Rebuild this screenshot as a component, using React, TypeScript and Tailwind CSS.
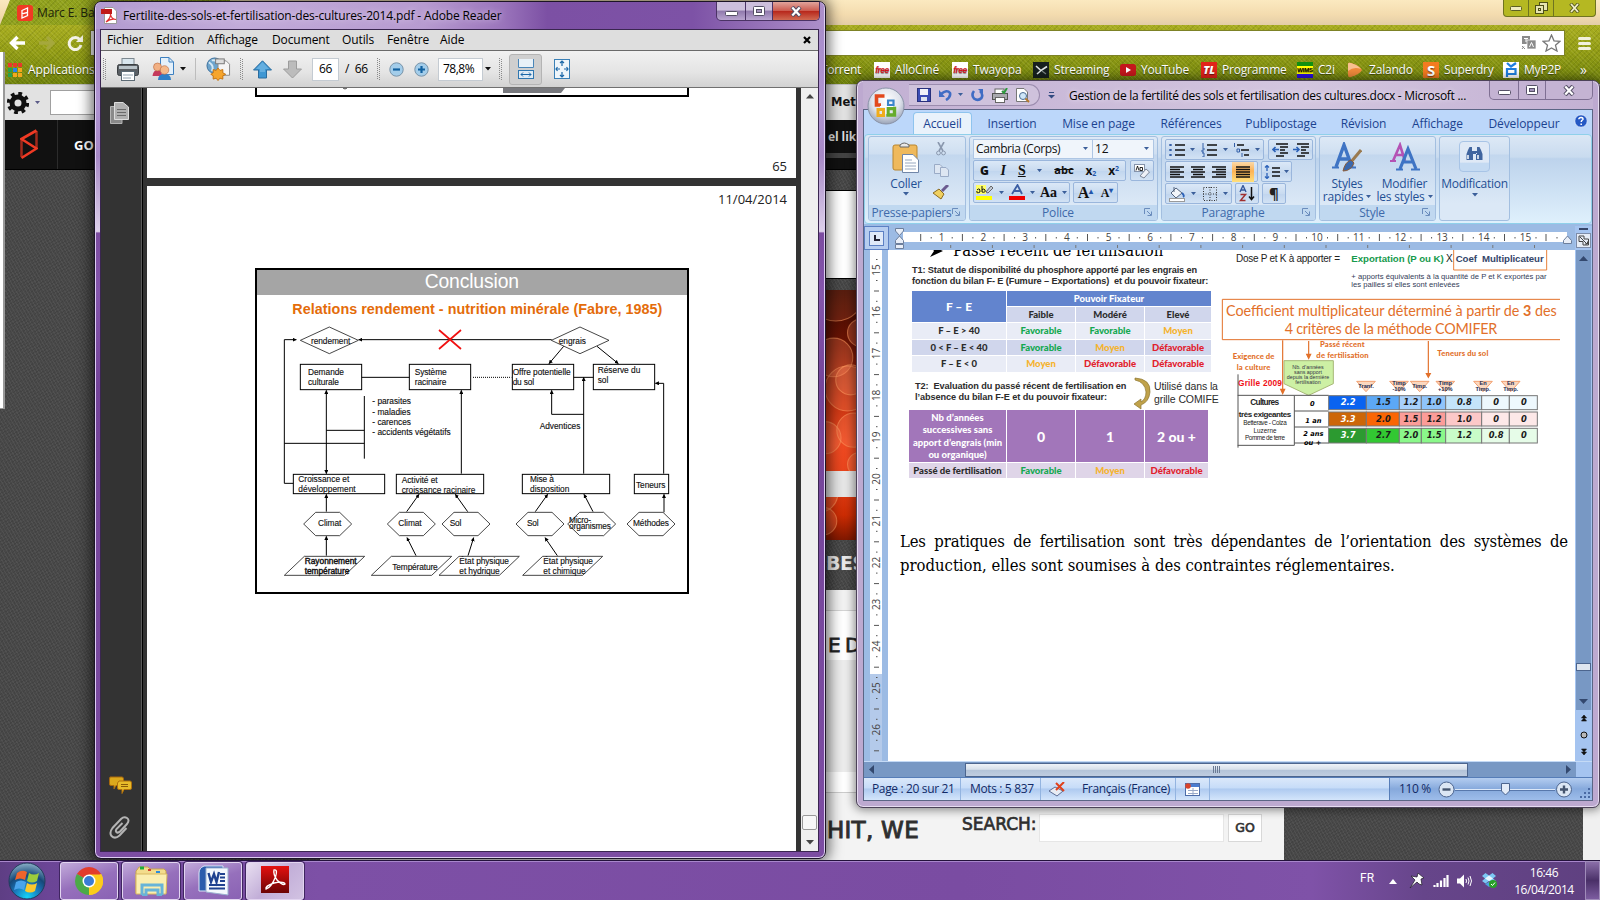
import type { ReactNode } from "react";

const UI = "font-['Open_Sans','Noto_Sans',sans-serif]";

/* ---------- small shared pieces ---------- */

function Caret({ color = "#3b5f9a", size = 6 }: { color?: string; size?: number }) {
  return (
    <svg width={size} height={size / 2 + 1} viewBox="0 0 6 4" className="shrink-0">
      <path d="M0 0H6L3 3.6Z" fill={color} />
    </svg>
  );
}

function Grip() {
  return (
    <svg width="4" height="22" viewBox="0 0 4 22">
      <path d="M0.5 0V22M2.5 1V22" stroke="#8a8a8a" strokeDasharray="1 1" />
    </svg>
  );
}

/* ---------- Chrome window in the background ---------- */

const bookmarks: { w: string; label: string; icon: ReactNode }[] = [
  { w: "w-[78px]", label: "AlloCiné", icon: <FreeIcon /> },
  { w: "w-[81px]", label: "Twayopa", icon: <FreeIcon /> },
  {
    w: "w-[87px]",
    label: "Streaming",
    icon: (
      <svg width="16" height="16" viewBox="0 0 16 16">
        <rect width="16" height="16" fill="#16201f" />
        <path d="M3 4L8 8.500L14 4.500M4 12L7.500 9" stroke="#dfe5e5" strokeWidth="1.6" fill="none" />
        <path d="M9 9L13 12" stroke="#7c8685" strokeWidth="1.200" />
      </svg>
    ),
  },
  {
    w: "w-[81px]",
    label: "YouTube",
    icon: (
      <svg width="16" height="16" viewBox="0 0 16 16">
        <rect y="2" width="16" height="12" rx="2.5" fill="#c4171c" />
        <path d="M6 5L11 8L6 11Z" fill="#fff" />
      </svg>
    ),
  },
  {
    w: "w-[96px]",
    label: "Programme",
    icon: (
      <span className="flex size-4 items-center justify-center bg-[#e2231a] text-[11px] font-black text-white italic">TL</span>
    ),
  },
  {
    w: "w-[51px]",
    label: "C2i",
    icon: (
      <span className="flex size-4 items-center justify-center overflow-hidden bg-[linear-gradient(#109010_0_22%,#ffff00_22%_76%,#2a10e0_76%)] font-['Liberation_Sans',sans-serif] text-[6px] font-bold text-black">
        WIMS
      </span>
    ),
  },
  {
    w: "w-[75px]",
    label: "Zalando",
    icon: (
      <svg width="16" height="16" viewBox="0 0 16 16">
        <path d="M0 2Q0 0 3 1Q12 4 14 8Q12 12 3 15Q0 16 0 13Z" fill="#f08a3c" />
        <path d="M0 2Q0 0 3 1Q10 3 13 7Q6 4 0 9Z" fill="#f9c090" />
      </svg>
    ),
  },
  {
    w: "w-[80px]",
    label: "Superdry",
    icon: <span className="flex size-4 items-center justify-center bg-[#f47b20] text-[15px] font-bold text-white">S</span>,
  },
  {
    w: "w-[74px]",
    label: "MyP2P",
    icon: (
      <svg width="16" height="16" viewBox="0 0 16 16">
        <rect width="16" height="16" fill="#fff" />
        <path d="M4 15V7H12.5V12H4M4 1L8 4.5L13 1" stroke="#1f7fe0" strokeWidth="2.2" fill="none" />
      </svg>
    ),
  },
];

function FreeIcon() {
  return (
    <span className="flex size-4 items-center justify-center overflow-hidden bg-white font-['Liberation_Sans',sans-serif] text-[8.5px] font-bold tracking-[-0.5px] text-[#d8141c] italic">
      free
    </span>
  );
}

const DENIM =
  "bg-[repeating-linear-gradient(45deg,rgba(255,255,160,.10)_0_1px,transparent_1px_3px),repeating-linear-gradient(-45deg,rgba(40,50,0,.12)_0_1px,transparent_1px_4px)]";
const FELT =
  "bg-[repeating-linear-gradient(60deg,rgba(255,255,255,.05)_0_1px,transparent_1px_3px),repeating-linear-gradient(-30deg,rgba(0,0,0,.08)_0_1px,transparent_1px_3px)]";

function Bokeh({ h, offset }: { h: number; offset: number }) {
  return (
    <svg width="964" height={h} viewBox={`480 ${offset} 964 ${h}`} className="block shrink-0">
      <defs>
        <linearGradient id={`bk${offset}`} gradientUnits="userSpaceOnUse" x1="0" y1="0" x2="0" y2="250">
          <stop offset="0" stopColor="#3a0a02" />
          <stop offset=".22" stopColor="#6e1404" />
          <stop offset=".45" stopColor="#c83412" />
          <stop offset=".62" stopColor="#ef4a22" />
          <stop offset=".74" stopColor="#e8441c" />
          <stop offset=".9" stopColor="#cc2c04" />
          <stop offset="1" stopColor="#801800" />
        </linearGradient>
      </defs>
      <rect x="480" y={offset} width="964" height={h} fill={`url(#bk${offset})`} />
      <g fill="#ff8a5c" fillOpacity=".28" stroke="#ff9a60" strokeOpacity=".55" transform="translate(-70 0) scale(1.07)">
        <circle cx="996" cy="2" r="27" fillOpacity=".15" />
        <circle cx="994" cy="63" r="18" />
        <circle cx="1007" cy="92" r="21" />
        <circle cx="1010" cy="84" r="14" />
        <circle cx="986" cy="138" r="15" />
        <circle cx="1013" cy="131" r="16" />
        <circle cx="1018" cy="163" r="11" />
        <circle cx="1020" cy="40" r="13" />
        <circle cx="984" cy="216" r="13" />
        <circle cx="980" cy="190" r="18" />
      </g>
    </svg>
  );
}

function ChromeWindow() {
  return (
    <div className="absolute inset-0 flex flex-col">
      {/* tab strip */}
      <div className="flex h-[25px] shrink-0 justify-between bg-[linear-gradient(#fbe9c0,#f3dbae_60%,#e3cda8)]">
        <div className={`flex h-[25px] w-[230px] items-start bg-[#8fa01c] pl-[17px] [clip-path:polygon(10px_0,100%_0,100%_100%,0_100%)] ${DENIM}`}>
          <svg width="16" height="16" viewBox="0 0 16 16" className="mt-[5px] shrink-0">
            <rect width="16" height="16" rx="3" fill="#f03a24" />
            <path d="M5 5.5L10.500 3V7.500L5 9ZM5 9V13L10.500 10.500V7.500" stroke="#fff" strokeWidth="1.3" fill="none" />
          </svg>
          <span className="mt-[4px] ml-[4px] text-[12px] leading-[18px] tracking-[-0.1px] whitespace-nowrap text-[#20240a]">Marc E. Ba</span>
        </div>
        <div className="mr-1 flex h-[17px] w-[93px] rounded-b-[4px] border border-t-0 border-[#6f7420] bg-[#b5b822]">
          <div className="flex w-[25px] items-center justify-center border-r border-[#6f7420]">
            <svg width="12" height="5"><rect x=".5" y=".5" width="11" height="4" rx="1" fill="#f0ecc0" stroke="#5c5f22" /></svg>
          </div>
          <div className="flex w-[25px] items-center justify-center border-r border-[#6f7420]">
            <svg width="13" height="13" fill="#e6e5b0" stroke="#4d5018">
              <rect x="4.500" y=".5" width="8" height="8" />
              <rect x=".5" y="3.500" width="8" height="8" />
              <rect x="3.500" y="6.500" width="2" height="2" />
            </svg>
          </div>
          <div className="flex flex-1 items-center justify-center">
            <svg width="11" height="10" viewBox="0 0 11 10"><path d="M1.500 0.500L9.500 9.500M9.500 0.500L1.500 9.500" stroke="#5c5f22" strokeWidth="3.500" /><path d="M2 1L9 9M9 1L2 9" stroke="#f3f0cc" strokeWidth="1.8" /></svg>
          </div>
        </div>
      </div>
      {/* toolbar and bookmarks bar */}
      <div className="flex h-[59px] shrink-0 flex-col bg-[linear-gradient(#a8ad20,#8f9a14_50%,#6d800c)]">
        <div className={`flex h-[59px] flex-col ${DENIM}`}>
          <div className="flex h-[31px] items-center pt-[5px]">
            <svg width="90" height="18" viewBox="0 0 90 18" className="shrink-0">
              <path d="M25 9H13M17.500 3L11.500 9L17.500 15" stroke="#fff" strokeWidth="3.400" fill="none" />
              <path d="M39 9H51M47 3L53 9L47 15" stroke="#a5a83c" strokeWidth="3.400" fill="none" />
              <path d="M80 6A6 6 0 1 0 81 11" stroke="#f4f3e6" strokeWidth="3" fill="none" />
              <path d="M76 8H83V1Z" fill="#f4f3e6" />
            </svg>
            <div className="flex h-[26px] flex-1 items-center justify-end gap-[6px] border border-[#7d8226] bg-white pr-[3px]">
              <svg width="15" height="14" viewBox="0 0 15 14">
                <rect x="1" width="8" height="8" fill="#8a8a8a" /><rect x="6" y="4" width="9" height="9" fill="#8a8a8a" stroke="#fff" strokeWidth=".7" />
                <path d="M8.500 11L10.500 6.500L12.500 11M3 2.500H7M5 2.500V6" stroke="#fff" fill="none" /><path d="M1 10L4 13M3 10.500L1 13" stroke="#8a8a8a" />
              </svg>
              <svg width="19" height="18" viewBox="0 0 19 18"><path d="M9.500 1L12 6.800L18 7.300L13.500 11.300L15 17L9.500 13.900L4 17L5.500 11.300L1 7.300L7 6.800Z" fill="#fff" stroke="#777" strokeWidth="1.300" /></svg>
            </div>
            <div className="flex w-[35px] flex-col items-center gap-[2px] pl-[3px]">
              <i className="h-[3px] w-[13px] rounded-sm bg-[#f2f0dc]" />
              <i className="h-[3px] w-[13px] rounded-sm bg-[#f2f0dc]" />
              <i className="h-[3px] w-[13px] rounded-sm bg-[#f2f0dc]" />
            </div>
          </div>
          <div className="flex h-[28px] items-center text-[12px] text-white [text-shadow:0_1px_1px_rgba(0,0,0,.5)]">
            <svg width="14" height="14" viewBox="0 0 14 14" className="ml-[8px] shrink-0">
              <path d="M0 2H14" stroke="#e83a2c" strokeWidth="4" strokeDasharray="4 1" />
              <path d="M0 7H4M0 12H4" stroke="#2aa14a" strokeWidth="4" />
              <path d="M5 7H9" stroke="#2a86e8" strokeWidth="4" />
              <path d="M5 12H9M10 12H14M10 7H14" stroke="#f4a81c" strokeWidth="4" />
            </svg>
            <span className="ml-[6px] w-[793px] shrink-0 tracking-[-0.15px]">Applications</span>
            <span className="w-[53px] shrink-0 tracking-[-0.3px]">Torrent</span>
            {bookmarks.map((b) => (
              <span key={b.label} className={`flex shrink-0 items-center gap-[5px] whitespace-nowrap tracking-[-0.2px] ${b.w}`}>
                {b.icon}
                {b.label}
              </span>
            ))}
            <span className="ml-[3px] text-[14px] leading-[14px]">»</span>
          </div>
        </div>
      </div>
      {/* web page */}
      <div className="flex min-h-0 flex-1">
        <div className="flex w-[1583px] flex-col bg-[#484848]">
          <div className="flex h-[36px] shrink-0 items-center border-t border-[#bfbfbf] bg-[#e2e2e2] pl-[7px]">
            <svg width="22" height="22" viewBox="-11 -11 22 22">
              <circle r="6" fill="none" stroke="#111" strokeWidth="5" />
              <circle r="9.500" fill="none" stroke="#111" strokeWidth="3.500" strokeDasharray="3.730 3.730" />
            </svg>
            <span className="ml-[6px]"><Caret color="#5c5c88" size={5} /></span>
            <div className="ml-[10px] h-[25px] w-[760px] border border-[#a0a0a0] bg-white" />
            <span className="ml-[21px] font-['DejaVu_Sans',sans-serif] text-[11.5px] font-bold text-[#141414]">Met</span>
          </div>
          <div className="flex h-[50px] shrink-0 border-b border-black bg-[#111] font-['Open_Sans',sans-serif] text-[13px] font-bold text-white">
            <div className="flex w-[58px] items-center justify-center border-r border-[#2c2c2c]">
              <svg width="18" height="31" viewBox="0 0 18 31"><path d="M1.500 10V28M16.500 20V2" stroke="#a02a1c" strokeWidth="2.500" fill="none" /><path d="M16.500 1.500L1.500 10L16.500 19.500L1.500 29" stroke="#f03a24" strokeWidth="2.600" fill="none" /></svg>
            </div>
            <span className="w-[262px] pt-[16px] pl-[16px]">GO</span>
            <div className="flex flex-1 flex-col">
              <span className="h-[33px] pt-[8px] pl-[508px] text-[12px] tracking-[-0.1px] text-[#ddd]">el lik</span>
              <div className="h-[5px] w-[964px] bg-[#444]" />
            </div>
          </div>
          <div className={`flex min-h-0 flex-1 ${FELT}`}>
            <div className="ml-[320px] flex w-[964px] flex-col">
              <div className="mt-[20px] h-[89px] shrink-0 border-y border-black bg-white" />
              <div className="h-[11px] shrink-0" />
              <Bokeh h={181} offset={0} />
              <div className="h-[26px] shrink-0 bg-[#e6e6e6]" />
              <Bokeh h={43} offset={207} />
              <div className="h-[50px] shrink-0 pt-[9px] pl-[506px] font-['DejaVu_Sans',sans-serif] text-[19px] font-bold tracking-tight text-[#e8e8e8]">BES</div>
              <div className="h-[21px] shrink-0 border-b border-[#d4d4d4] bg-[#f2f2f2]" />
              <div className="flex h-[49px] shrink-0 items-center bg-white pt-[19px] pl-[508px] font-['DejaVu_Sans',sans-serif] text-[20px] text-[#111] [-webkit-text-stroke:.8px_#333]">
                <span className="w-[17px]">E</span>D
              </div>
              <div className="h-[112px] shrink-0 bg-[#ececec]" />
              <div className="h-[21px] shrink-0 border-b border-[#ccc] bg-white" />
              <div className="flex min-h-0 flex-1 bg-[#f3f3f3] pt-[21px] font-['DejaVu_Sans',sans-serif] text-[#2c2c2c]">
                <span className="w-[599px] text-right text-[23px] leading-[32px] tracking-[0.3px] [-webkit-text-stroke:1px_#333]">HIT, WE</span>
                <span className="ml-[43px] w-[77px] text-[17px] leading-[20px] tracking-[0px] [-webkit-text-stroke:.7px_#333]">SEARCH:</span>
                <div className="h-[28px] w-[185px] border border-[#e6e6e6] bg-white" />
                <div className="ml-[4px] flex h-[28px] w-[34px] items-center justify-center border border-[#d8d8d8] bg-white text-[12.500px] [-webkit-text-stroke:.6px_#333]">GO</div>
              </div>
            </div>
          </div>
        </div>
        <div className="flex-1 bg-[#f0f0f0]" />
      </div>
      {/* edge of a window lying over the left side */}
      <div className="absolute top-[52px] left-0 h-[357px] w-[5px] border-r-2 border-b border-[#999] bg-white" />
    </div>
  );
}

/* ---------- window buttons ---------- */

function WindowButtons({ danger }: { danger: boolean }) {
  return (
    <div className={`flex h-[19px] w-[104px] shrink-0 overflow-hidden rounded-b-[5px] border border-t-0 ${danger ? "border-[#4b3366] bg-[linear-gradient(#cdbfdc_45%,#8f78ac_50%,#b9a5d0)]" : "border-[#7f6f93] bg-[#c4b3d3]"}`}>
      <div className={`flex w-[29px] items-center justify-center border-r ${danger ? "border-[#4b3366]" : "border-[#7f6f93]"}`}>
        <svg width="13" height="5" className="mt-[4px]"><rect x=".5" y=".5" width="12" height="4" rx="1" fill="#fff" stroke="#555066" /></svg>
      </div>
      <div className={`flex w-[27px] items-center justify-center border-r ${danger ? "border-[#4b3366]" : "border-[#7f6f93]"}`}>
        <svg width="12" height="10"><rect x=".5" y=".5" width="11" height="9" rx="1" fill="#fff" stroke="#555066" /><rect x="3.500" y="3.500" width="5" height="3" fill="#a594bd" stroke="#555066" /></svg>
      </div>
      <div className={`flex flex-1 items-center justify-center ${danger ? "bg-[linear-gradient(#e0a49c,#cc5c50_48%,#b8281c_52%,#d06a52)]" : ""}`}>
        <svg width="12" height="11" viewBox="0 0 12 11"><path d="M2 1L10 10M10 1L2 10" stroke="#555066" strokeWidth="4.200" /><path d="M2.300 1.500L9.700 9.500M9.700 1.500L2.300 9.500" stroke="#fff" strokeWidth="2.200" /></svg>
      </div>
    </div>
  );
}

/* ---------- Adobe Reader ---------- */

type Pt = { x: number; y: number; w: number; t: string; b?: boolean };

const labels: Pt[] = [
  { x: 213, y: 266, w: 118, t: "rendement" },
  { x: 956, y: 266, w: 82, t: "engrais" },
  { x: 204, y: 360, w: 108, t: "Demande" },
  { x: 204, y: 389, w: 93, t: "culturale" },
  { x: 524, y: 360, w: 96, t: "Système" },
  { x: 524, y: 389, w: 95, t: "racinaire" },
  { x: 818, y: 360, w: 174, t: "Offre potentielle" },
  { x: 818, y: 389, w: 64, t: "du sol" },
  { x: 1073, y: 354, w: 128, t: "Réserve du" },
  { x: 1073, y: 383, w: 32, t: "sol" },
  { x: 397, y: 446, w: 116, t: "- parasites" },
  { x: 397, y: 479, w: 115, t: "- maladies" },
  { x: 397, y: 509, w: 116, t: "- carences" },
  { x: 397, y: 539, w: 235, t: "- accidents végétatifs" },
  { x: 899, y: 521, w: 122, t: "Adventices" },
  { x: 175, y: 681, w: 153, t: "Croissance et" },
  { x: 175, y: 711, w: 172, t: "développement" },
  { x: 485, y: 684, w: 108, t: "Activité et" },
  { x: 485, y: 713, w: 221, t: "croissance racinaire" },
  { x: 870, y: 681, w: 72, t: "Mise à" },
  { x: 870, y: 711, w: 118, t: "disposition" },
  { x: 1188, y: 698, w: 88, t: "Teneurs" },
  { x: 234, y: 812, w: 70, t: "Climat" },
  { x: 475, y: 812, w: 70, t: "Climat" },
  { x: 629, y: 812, w: 35, t: "Sol" },
  { x: 861, y: 812, w: 35, t: "Sol" },
  { x: 987, y: 803, w: 66, t: "Micro-" },
  { x: 987, y: 821, w: 126, t: "organismes" },
  { x: 1179, y: 812, w: 108, t: "Méthodes" },
  { x: 194, y: 927, w: 156, t: "Rayonnement", b: true },
  { x: 194, y: 956, w: 134, t: "température", b: true },
  { x: 457, y: 945, w: 136, t: "Température" },
  { x: 658, y: 927, w: 149, t: "État physique" },
  { x: 658, y: 956, w: 121, t: "et hydrique" },
  { x: 910, y: 927, w: 149, t: "État physique" },
  { x: 910, y: 956, w: 127, t: "et chimique" },
];

const boxes = [
  [181, 328, 184, 76],
  [508, 328, 184, 76],
  [817, 328, 184, 76],
  [1060, 328, 184, 76],
  [160, 658, 274, 58],
  [469, 658, 262, 58],
  [847, 658, 262, 58],
  [1183, 658, 103, 58],
];
const hexes = [191, 442, 606, 828, 983, 1161];
const slants = [
  [133, 374],
  [394, 635],
  [597, 838],
  [848, 1088],
];

function YieldDiagram() {
  return (
    <svg width="434" height="326" viewBox="45 39 1302 978" className="block" fontFamily="'Liberation Sans',sans-serif">
      <defs>
        <marker id="ah" viewBox="0 0 10 10" refX="9" refY="5" markerWidth="12" markerHeight="12" markerUnits="userSpaceOnUse" orient="auto-start-reverse">
          <path d="M0 0L10 5L0 10Z" fill="#000" />
        </marker>
      </defs>
      <rect x="48" y="42" width="1296" height="972" fill="#fff" stroke="#000" strokeWidth="6" />
      <rect x="51" y="45" width="1290" height="75" fill="#a5a5a5" />
      <text x="554" y="98" fontSize="58" fill="#fff" textLength="283">Conclusion</text>
      <text x="157" y="177" fontSize="43" fontWeight="bold" fill="#e46c0a" textLength="1110">Relations rendement - nutrition minérale (Fabre, 1985)</text>
      <g fill="none" stroke="#000" strokeWidth="3">
        {boxes.map(([x, y, w, h]) => (
          <rect key={`${x}-${y}`} x={x} y={y} width={w} height={h} />
        ))}
        <path d="M365 367H508M1001 367H1060M373 423V611M133 565H373M259 526H373" />
        <path d="M160 685H133V254H169" markerEnd="url(#ah)" />
        <path d="M935 254H356" markerEnd="url(#ah)" />
        <path d="M259 406V656" markerEnd="url(#ah)" markerStart="url(#ah)" />
        <path d="M664 656V406" markerEnd="url(#ah)" />
        <path d="M1031 656V367" markerEnd="url(#ah)" />
        <path d="M1031 478H935V406" markerEnd="url(#ah)" />
        <path d="M1271 656V385H1246" markerEnd="url(#ah)" />
        <path d="M971 274L927 326" markerEnd="url(#ah)" />
        <path d="M1071 274L1135 326" markerEnd="url(#ah)" />
        <path d="M259 770V718" markerEnd="url(#ah)" />
        <path d="M500 770L537 718" markerEnd="url(#ah)" />
        <path d="M683 770L646 718" markerEnd="url(#ah)" />
        <path d="M886 770L923 718" markerEnd="url(#ah)" />
        <path d="M1059 770L1032 718" markerEnd="url(#ah)" />
        <path d="M1272 772V718" markerEnd="url(#ah)" />
        <path d="M259 902V844" markerEnd="url(#ah)" />
        <path d="M528 902L501 848" markerEnd="url(#ah)" />
        <path d="M684 902L701 848" markerEnd="url(#ah)" />
        <path d="M952 902L915 848" markerEnd="url(#ah)" />
      </g>
      <path d="M699 367H814" stroke="#000" strokeWidth="3" strokeDasharray="3 3" />
      <g fill="none" stroke="#222" strokeWidth="2.500">
        <path d="M181 256L268 216L355 256L268 296ZM934 256L1020 216L1107 256L1020 296Z" />
        {hexes.map((x) => (
          <path key={x} d={`M${x} 807L${x + 36} 772H${x + 108}L${x + 144} 807L${x + 108} 842H${x + 36}Z`} />
        ))}
        {slants.map(([a, b]) => (
          <path key={a} d={`M${a} 961L${a + 60} 904H${b}L${b - 60} 961Z`} />
        ))}
      </g>
      <path d="M597 225L663 282M663 225L597 282" stroke="#f01010" strokeWidth="5" />
      {labels.map((l) => (
        <text key={`${l.x}-${l.y}`} x={l.x} y={l.y} fontSize="25" textLength={l.w} stroke="#111" strokeWidth={l.b ? 1.2 : 0.4} fill="#111">
          {l.t}
        </text>
      ))}
    </svg>
  );
}

function AdobeToolbar() {
  return (
    <div className="flex h-[37px] shrink-0 items-center border-b border-[#707070] bg-[linear-gradient(#f1f1f1,#e4e4e4_60%,#d2d2d2)] text-[12px] text-black">
      <div className="flex w-[8px] justify-center"><Grip /></div>
      <div className="flex w-[37px] justify-center">
        <svg width="22" height="23" viewBox="0 0 22 23">
          <rect x="5" y=".5" width="12" height="8" fill="#d9e6ee" stroke="#7c8890" />
          <rect x=".5" y="6.500" width="21" height="11" rx="2" fill="#5a5f64" stroke="#3b3f42" />
          <rect x="2" y="8" width="18" height="3" fill="#b9c3c9" />
          <rect x="4.500" y="13.500" width="13" height="9" fill="#fff" stroke="#5c6a74" />
          <path d="M6 17H16M6 20H14" stroke="#8fa0ac" />
        </svg>
      </div>
      <div className="flex w-[34px] justify-center">
        <svg width="23" height="24" viewBox="0 0 23 24">
          <path d="M8.500 .5H17L21.500 5V17.500H8.500Z" fill="#e4f0fa" stroke="#3d80c0" />
          <path d="M17 .5V5H21.500" fill="none" stroke="#3d80c0" />
          <path d="M.5 19Q1 13 6 13Q10 13 10 19Z" fill="#c43a5c" /><circle cx="5.500" cy="10" r="4" fill="#f2b083" stroke="#b8663c" strokeWidth=".6" />
          <path d="M6 23Q6 17 12.500 17Q19 17 19 23Z" fill="#2f7fc8" /><circle cx="12.500" cy="13" r="4.300" fill="#f5b98a" stroke="#b8663c" strokeWidth=".6" />
        </svg>
      </div>
      <div className="flex w-[5px] justify-center"><Caret color="#111" size={6} /></div>
      <div className="flex w-[21px] justify-center"><i className="h-[22px] w-px bg-[#bdbdbd]" /></div>
      <div className="flex w-[25px] justify-center">
        <svg width="26" height="25" viewBox="0 0 26 25">
          <circle cx="9" cy="8.500" r="8" fill="#6da4cc" stroke="#3c6f9c" /><path d="M3 5Q9 9 6 14M6 3Q12 2 14 8" stroke="#d5e8f4" strokeWidth="2" fill="none" />
          <path d="M12.500 3.500H21L24.500 7V18.500H12.500Z" fill="#f5f5f5" stroke="#888" /><rect x="10" y="1.500" width="9" height="5" fill="#ddd" stroke="#777" />
          <path d="M12.500 11L14.500 13.500L17.500 12.500L17.500 16L20.500 17.500L17.500 19L17.500 22.500L14.500 21.500L12.500 24L10.500 21.500L7.500 22.500L7.500 19L5 17.500L7.500 16L7.500 12.500L10.500 13.500Z" fill="#f6a52c" stroke="#c47310" />
        </svg>
      </div>
      <div className="flex w-[21px] justify-center"><Grip /></div>
      <div className="flex w-[21px] justify-center">
        <svg width="21" height="19" viewBox="0 0 21 19"><path d="M10.500 .8L19.500 10H14.500V18H6.500V10H1.500Z" fill="#3f97d3" stroke="#2a6c9e" /><path d="M10.500 2L4 9H8V12H13V9H17Z" fill="#7fc0ea" opacity=".6" /></svg>
      </div>
      <div className="flex w-[39px] justify-center">
        <svg width="21" height="19" viewBox="0 0 21 19"><path d="M10.500 18L19.500 9H14.500V1H6.500V9H1.500Z" fill="#bcbcbc" stroke="#9c9c9c" /></svg>
      </div>
      <div className="flex h-[23px] w-[27px] items-center justify-center border border-[#c4cbd2] bg-white tracking-[-0.3px]">66</div>
      <div className="w-[35px] text-center tracking-[-0.3px] whitespace-pre">/  66</div>
      <div className="flex w-[10px] justify-center"><Grip /></div>
      <div className="flex w-[24px] justify-center"><ZoomDot d="M4 7.500H11" /></div>
      <div className="flex w-[26px] justify-center"><ZoomDot d="M4 7.500H11M7.500 4V11" /></div>
      <div className="ml-[4px] flex h-[23px] w-[45px] items-center border border-[#c4cbd2] bg-white pl-[4px] tracking-[-0.5px]">78,8%</div>
      <div className="flex w-[10px] justify-center"><Caret color="#111" size={6} /></div>
      <div className="flex w-[16px] justify-center"><Grip /></div>
      <div className="flex h-[31px] w-[33px] items-center justify-center rounded-[3px] border border-[#b4b4b4] bg-[#cfcfcf]">
        <svg width="16" height="21" viewBox="0 0 16 21"><rect x=".5" y="0" width="15" height="9" fill="#e8f1f8" /><path d="M.5 0V8.500H15.500V0" fill="none" stroke="#4a86b8" /><rect x=".5" y="11.500" width="15" height="8" fill="#deebf5" stroke="#2f77b0" /><path d="M3 15.500H13M5 13.500L3 15.500L5 17.500M11 13.500L13 15.500L11 17.500" stroke="#1c68a8" fill="none" /></svg>
      </div>
      <div className="flex w-[40px] justify-center">
        <svg width="16" height="20" viewBox="0 0 16 20"><rect x=".5" y=".5" width="15" height="19" fill="#eef5fa" stroke="#3a80b6" /><path d="M8 2V7M8 13V18M2 10H6M10 10H14M6 4L8 2L10 4M6 16L8 18L10 16M3.500 8L2 10L3.500 12M12.500 8L14 10L12.500 12" stroke="#1c68a8" strokeWidth="1.200" fill="none" /></svg>
      </div>
    </div>
  );
}

function ZoomDot({ d }: { d: string }) {
  return (
    <svg width="15" height="15" viewBox="0 0 15 15">
      <circle cx="7.500" cy="7.500" r="6.700" fill="#a3cdea" stroke="#7893a8" />
      <path d={d} stroke="#11619f" strokeWidth="2.200" />
    </svg>
  );
}

function AdobeWindow() {
  return (
    <div className="absolute top-px left-[94px] flex h-[858px] w-[732px] flex-col rounded-[7px] border border-[#1c1426] bg-[linear-gradient(#a68cc8,#b094d2_12%,#a688c6_18%,#ddd0ea_26.8%,#7c4ca0_27%,#8456ac_34%,#744499_45%,#7c4da2)] pr-[6px] pb-[6px] pl-[5px] shadow-[0_0_14px_3px_rgba(0,0,0,.6),inset_0_0_0_1px_#dccdf0]">
      <div className="-mr-[5px] -ml-[4px] flex h-[27px] shrink-0 justify-between rounded-t-[6px] bg-[linear-gradient(90deg,#b29bd0,#c2abd9_20%,#b79bd0_45%,#9a74bb_56%,#7c50a4_62%,#7d52a6_82%,#ad90ca)] pl-[5px]">
        <div className="flex items-center text-[12px] text-black">
          <svg width="17" height="17" viewBox="0 0 17 17">
            <path d="M3.500 .5H12L15.500 4V16.500H3.500Z" fill="#fff" stroke="#999" />
            <rect x="0" y="2" width="11" height="5" fill="#c01818" />
            <path d="M5 15Q10 11 9.500 7Q10 12 15 12.500Q10 11 5 15" stroke="#e03030" strokeWidth="1.200" fill="none" />
          </svg>
          <span className="ml-[5px] tracking-[-0.14px] whitespace-nowrap [text-shadow:0_0_6px_#e4d8f0]">Fertilite-des-sols-et-fertilisation-des-cultures-2014.pdf - Adobe Reader</span>
        </div>
        <div className="mr-[4px]"><WindowButtons danger /></div>
      </div>
      <div className="flex min-h-0 flex-1 flex-col border border-[#3a2650] bg-[#333]">
        <div className="flex h-[21px] shrink-0 items-center border-b border-[#6a6a6a] bg-[#dedede] text-[12px] leading-[18px] tracking-[-0.1px] text-black">
          <span className="w-[49px] pl-[6px]">Fichier</span>
          <span className="w-[51px] pl-[6px]">Edition</span>
          <span className="w-[65px] pl-[6px]">Affichage</span>
          <span className="w-[70px] pl-[6px]">Document</span>
          <span className="w-[45px] pl-[6px]">Outils</span>
          <span className="w-[53px] pl-[6px]">Fenêtre</span>
          <span className="flex-1 pl-[6px]">Aide</span>
          <svg width="8" height="8" viewBox="0 0 8 8" className="mr-[7px]"><path d="M1 1L7 7M7 1L1 7" stroke="#000" strokeWidth="2.200" /></svg>
        </div>
        <AdobeToolbar />
        <div className="flex min-h-0 flex-1">
          <div className="flex w-[41px] shrink-0 flex-col items-center border-r border-[#5a5a5a] pb-[12px]">
            <svg width="19" height="22" viewBox="0 0 19 22" className="mt-[14px] mr-[3px]">
              <path d="M.5 4.500H12V21.500H.5Z" fill="#8a8a8a" stroke="#b5b5b5" />
              <path d="M4.500 .5H13L18.500 5V17.500H4.500Z" fill="#b0b0b0" stroke="#ddd" />
              <path d="M7 7.500H16M7 10.500H16M7 13.500H16" stroke="#6a6a6a" />
            </svg>
            <svg width="23" height="18" viewBox="0 0 23 18" className="mt-auto mr-[2px]">
              <path d="M1 1H13Q14.500 1 14.500 3V8Q14.500 9.500 13 9.500H7L5 13V9.500H2Q.5 9.500 .5 8V3Z" fill="#dba81c" stroke="#a8680c" />
              <path d="M10 5H21Q22.500 5 22.500 7V12Q22.500 13.500 21 13.500H15L13 17.500V13.500H10Q8.500 13.500 8.500 12V7Z" fill="#e8bb2a" stroke="#b0700c" />
              <path d="M12 8.500H19M12 10.500H19" stroke="#8a5a08" />
            </svg>
            <svg width="22" height="23" viewBox="0 0 22 23" className="mt-[22px] mr-[2px]">
              <path d="M13.500 7L7.500 13Q6 15.500 8 16.500Q9.500 17 11 15.500L18 8Q21 4 18 2Q15 0 12 3L3.500 12Q0 16.500 2.500 20Q6 23.500 10.500 19.500L17.500 12" fill="none" stroke="#b4b4b4" strokeWidth="2" />
            </svg>
          </div>
          <div className="w-[5px] shrink-0 border-l border-black" />
          <div className="flex w-[649px] shrink-0 flex-col gap-[8px] text-[13px] text-[#222]">
            <div className="flex h-[90px] shrink-0 flex-col justify-between bg-white">
              <div className="ml-[108px] h-[9px] w-[434px] border-[2px] border-t-0 border-black">
                <svg width="250" height="5" className="ml-[84px] block"><path d="M2 0Q4 2 6 0" stroke="#444" fill="none" /><path d="M162 0H224L220 5H162Z" fill="#77787d" /></svg>
              </div>
              <span className="pr-[9px] pb-[2px] text-right">65</span>
            </div>
            <div className="min-h-0 flex-1 bg-white">
              <div className="h-[82px] pt-[4px] pr-[9px] text-right">11/04/2014</div>
              <div className="ml-[108px]"><YieldDiagram /></div>
            </div>
          </div>
          <div className="w-[5px] shrink-0" />
          <div className="flex flex-1 flex-col items-center bg-[#efefef]">
            <svg width="8" height="5" viewBox="0 0 8 5" className="mt-[6px]"><path d="M0 4.500L4 0L8 4.500Z" fill="#444" /></svg>
            <div className="mt-auto h-[15px] w-[15px] rounded-[2px] border border-[#999] bg-[#f7f7f7]" />
            <svg width="8" height="5" viewBox="0 0 8 5" className="mt-[10px] mb-[6px]"><path d="M0 0L4 4.500L8 0Z" fill="#444" /></svg>
          </div>
        </div>
      </div>
    </div>
  );
}

/* ---------- Word ---------- */

const wordTabs = [
  ["Insertion", "w-[80px]"],
  ["Mise en page", "w-[93px]"],
  ["Références", "w-[92px]"],
  ["Publipostage", "w-[88px]"],
  ["Révision", "w-[77px]"],
  ["Affichage", "w-[71px]"],
  ["Développeur", "w-[102px]"],
];

function Group({ w, label, launcher = true, children }: { w: string; label: string; launcher?: boolean; children: ReactNode }) {
  return (
    <div className={`flex h-[85px] shrink-0 flex-col overflow-hidden rounded-[3px] border border-[#a3bfe0] bg-[linear-gradient(#dde9f6,#cfdff1_20%,#c3d7ee_22%,#dbe8f6_80%)] ${w}`}>
      <div className="min-h-0 flex-1">{children}</div>
      {label && (
        <div className="flex h-[15px] shrink-0 items-center bg-[#c0d8f0] text-[12px] text-[#3e6aaa]">
          <span className="flex-1 pl-[2px] text-center leading-[15px] tracking-[-0.2px] whitespace-nowrap">{label}</span>
          {launcher && (
            <svg width="9" height="9" viewBox="0 0 9 9" className="mr-[4px] shrink-0"><path d="M.5 6V.5H6" stroke="#6a8cbc" fill="none" /><path d="M3 3L7 7M7.500 3.500V7.500H3.500" stroke="#6a8cbc" fill="none" /></svg>
          )}
        </div>
      )}
    </div>
  );
}

function Strip({ w, children }: { w: string; children: ReactNode }) {
  return <div className={`flex h-[21px] shrink-0 items-center justify-around rounded-[2px] border border-[#9ab6dc] bg-[linear-gradient(#dbe8f7,#c9dbf0_50%,#c0d5ee_52%,#d2e2f4)] ${w}`}>{children}</div>;
}

function Lines({ v, accent }: { v: string; accent?: ReactNode }) {
  return (
    <svg width="16" height="14" viewBox="0 0 16 14">
      <path d={v} stroke="#111" strokeWidth="1.300" />
      {accent}
    </svg>
  );
}

const bullets = "M6 2H16M6 7H16M6 12H16";

function Ribbon() {
  return (
    <div className="flex h-[90px] shrink-0 gap-[3px] rounded-[4px] border border-[#8fd0ea] bg-[linear-gradient(#dbe7f5,#c9dbef_25%,#bdd3ec_27%,#dff0fc)] px-[3px] pt-[1px]">
      <Group w="w-[98px]" label="Presse-papiers">
        <div className="flex">
          <div className="flex w-[70px] flex-col items-center pt-[5px] pl-[4px] text-[12px] leading-[15px] text-[#1f4f94]">
            <svg width="28" height="31" viewBox="0 0 28 31">
              <rect x="1" y="3" width="24" height="25" rx="2" fill="#efb95c" stroke="#b9862f" />
              <path d="M8 5V3Q12 -1 17 3V5Z" fill="#e8e8e8" stroke="#666" />
              <path d="M10.500 12.500H21L26.500 18V30.500H10.500Z" fill="#fff" stroke="#7086a8" />
              <path d="M13 18H20M13 21H24M13 24H24M13 27H24" stroke="#98a8c0" />
            </svg>
            <span className="mt-[3px] tracking-[-0.2px]">Coller</span>
            <span className="mt-[1px]"><Caret /></span>
          </div>
          <div className="-ml-[6px] flex flex-col items-center gap-[8px] pt-[5px]">
            <svg width="10" height="14" viewBox="0 0 10 14" stroke="#8a98ae" fill="none"><path d="M2 0L7 9M8 0L3 9" strokeWidth="1.600" /><circle cx="2.500" cy="11" r="1.900" /><circle cx="7.500" cy="11" r="1.900" /></svg>
            <svg width="15" height="13" viewBox="0 0 15 13" fill="#dde6f2" stroke="#9aabc6"><path d="M.5 .5H6L8.500 3V9.500H.5Z" /><path d="M6.500 3.500H12L14.500 6V12.500H6.500Z" /></svg>
            <svg width="16" height="15" viewBox="0 0 16 15"><path d="M15 0L9 6" stroke="#6a5a90" strokeWidth="3" /><path d="M6 4L11 9L8 14L0 8Z" fill="#f0d060" stroke="#8a6a20" /></svg>
          </div>
        </div>
      </Group>
      <Group w="w-[189px]" label="Police">
        <div className="flex flex-col gap-[1px] px-[3px] pt-[2px] text-[12px] text-[#111]">
          <div className="flex h-[20px] border border-[#aec6e4] bg-[#f0f5fb]">
            <span className="flex w-[119px] items-center justify-between border-r border-[#aec6e4] pr-[4px] pl-[2px] tracking-[-0.4px]">Cambria (Corps)<Caret size={5} /></span>
            <span className="flex flex-1 items-center justify-between pr-[4px] pl-[2px]">12<Caret size={5} /></span>
          </div>
          <div className="flex gap-[4px]">
            <Strip w="w-[153px]">
              <b className="font-black">G</b>
              <i className="font-['Liberation_Serif',serif] text-[14px] font-bold">I</i>
              <b className="font-['Liberation_Serif',serif] text-[14px] underline">S</b>
              <Caret size={5} />
              <s className="text-[11px] font-bold">abc</s>
              <b>x<sub className="text-[7px] text-[#2255aa]">2</sub></b>
              <b>x<sup className="text-[7px] text-[#2255aa]">2</sup></b>
            </Strip>
            <Strip w="w-[24px]">
              <svg width="16" height="16" viewBox="0 0 16 16"><rect x=".5" y="1.500" width="10" height="7" fill="#fff" stroke="#8593ab" /><path d="M2 7.500L3.500 3L5 7.500M6 7.500V4.500H8.500V7.500Z" stroke="#111" strokeWidth=".9" fill="none" /><path d="M6 13L12 6L15.500 9L10 15Z" fill="#eef1f8" stroke="#7d8698" /></svg>
            </Strip>
          </div>
          <div className="flex gap-[3px]">
            <Strip w="w-[97px]">
              <svg width="18" height="17" viewBox="0 0 18 17"><rect y="1" width="10" height="9" fill="#ffff66" /><path d="M1 6Q4 3 4 8Q0 10 1 7M6 2V8Q10 9 9 6Q8 4 6 6" stroke="#111" fill="none" /><path d="M10 8L15 2L17 4L12 9Z" fill="#c4ccd8" stroke="#666" /><rect y="12" width="16" height="4" fill="#ffff00" /></svg>
              <Caret size={5} />
              <svg width="17" height="17" viewBox="0 0 17 17"><path d="M3 10L8.500 1L13 10M5 7H12" stroke="#3b5ea4" strokeWidth="1.800" fill="none" /><rect y="12" width="16" height="4" fill="#f00000" /></svg>
              <Caret size={5} />
              <b className="font-['Liberation_Serif',serif] text-[14px]">Aa</b>
              <Caret size={5} />
            </Strip>
            <Strip w="w-[45px]">
              <b className="font-['Liberation_Serif',serif] text-[16px]">A<sup className="text-[8px] text-[#2255aa]">▴</sup></b>
              <b className="font-['Liberation_Serif',serif] text-[12px]">A<sup className="text-[8px] text-[#2255aa]">▾</sup></b>
            </Strip>
          </div>
        </div>
      </Group>
      <Group w="w-[155px]" label="Paragraphe">
        <div className="flex flex-col gap-[1px] px-[3px] pt-[2px]">
          <div className="flex gap-[4px]">
            <Strip w="w-[99px]">
              <Lines v={bullets} accent={<path d="M1.500 1V3M1.500 6V8M1.500 11V13" stroke="#3560a8" strokeWidth="2.400" />} />
              <Caret size={5} />
              <Lines v={bullets} accent={<path d="M2 0V4M1 5H3V7H1V9H3M1 10H3V14H1" stroke="#3560a8" fill="none" />} />
              <Caret size={5} />
              <Lines v="M4 2H11M8 7H16M11 12H16" accent={<path d="M1.500 0V4M4 6H6.500V9H4ZM9 10V14" stroke="#3560a8" fill="none" />} />
              <Caret size={5} />
            </Strip>
            <Strip w="w-[45px]">
              <Lines v="M4 1H16M8 4H16M8 7H13M8 10H16M4 13H12" accent={<path d="M7 6.500H1M3.500 4L1 6.500L3.500 9" stroke="#2c62b8" strokeWidth="1.600" fill="none" />} />
              <Lines v="M4 1H16M8 4H16M8 7H13M8 10H16M4 13H12" accent={<path d="M0 6.500H6M3.500 4L6 6.500L3.500 9" stroke="#2c62b8" strokeWidth="1.600" fill="none" />} />
            </Strip>
          </div>
          <div className="flex gap-[3px]">
            <Strip w="w-[93px]">
              <Lines v="M1 2H15M1 4.500H11M1 7H15M1 9.500H11M1 12H15" />
              <Lines v="M1 2H15M3 4.500H13M1 7H15M3 9.500H13M1 12H15" />
              <Lines v="M1 2H15M5 4.500H15M1 7H15M5 9.500H15M1 12H15" />
              <span className="flex h-[20px] w-[22px] items-center justify-center bg-[linear-gradient(#fbd9a8,#fcb255_45%,#ffe07c)]">
                <Lines v="M1 2H15M1 4.500H15M1 7H15M1 9.500H15M1 12H15" />
              </span>
            </Strip>
            <Strip w="w-[31px]">
              <Lines v="M8 3H16M8 7H16M8 11H16" accent={<path d="M3 0V6M3 8V14M1 2.500L3 .5L5 2.500M1 11.500L3 13.500L5 11.500" stroke="#2c62b8" strokeWidth="1.300" fill="none" />} />
              <Caret size={5} />
            </Strip>
          </div>
          <div className="flex gap-[3px]">
            <Strip w="w-[67px]">
              <svg width="16" height="16" viewBox="0 0 16 16"><path d="M7 2L13 7L7 12L2 7Z" fill="#f3f6fb" stroke="#55657f" /><path d="M5 1V6" stroke="#55657f" /><path d="M13 7Q16 10 14 11" stroke="#2c62b8" strokeWidth="1.800" fill="none" /><rect x=".5" y="12.500" width="15" height="3" fill="#fff" stroke="#9a9a9a" /></svg>
              <Caret size={5} />
              <svg width="14" height="14" viewBox="0 0 14 14"><path d="M.5 .5H13.500V13.500H.5ZM7 0V14M0 7H14" stroke="#333" strokeDasharray="1 1.500" fill="none" /></svg>
              <Caret size={5} />
            </Strip>
            <Strip w="w-[24px]">
              <svg width="16" height="17" viewBox="0 0 16 17"><path d="M1 7L4 .5L7 7M2 5H6" stroke="#35589c" strokeWidth="1.400" fill="none" /><path d="M1.500 9.500H6.500L1.500 15.500H6.500" stroke="#a03030" strokeWidth="1.500" fill="none" /><path d="M12.500 2V14M10 11.500L12.500 14.500L15 11.500" stroke="#111" strokeWidth="1.500" fill="none" /></svg>
            </Strip>
            <Strip w="w-[24px]"><span className="text-[15px] leading-[15px] font-bold text-[#222]">¶</span></Strip>
          </div>
        </div>
      </Group>
      <Group w="w-[117px]" label="Style">
        <div className="flex pt-[5px] text-center text-[12px] leading-[13px] tracking-[-0.2px] text-[#1f4f94]">
          <div className="flex w-[54px] flex-col items-center">
            <svg width="30" height="31" viewBox="0 0 30 31"><path d="M4 25L12 3L20 25M7 17H17" stroke="#3f74c4" strokeWidth="3.400" fill="none" /><path d="M0 25.500H7M15 25.500H24" stroke="#3f74c4" strokeWidth="2" /><path d="M29 8L19 20" stroke="#9a7a50" strokeWidth="3" /><path d="M19 18Q13 20 11 29Q19 29 22 21Z" fill="#3b68ac" stroke="#8d5a34" /></svg>
            <span className="mt-[4px]">Styles</span>
            <span className="flex items-center gap-[3px]">rapides <Caret size={5} /></span>
          </div>
          <div className="flex flex-1 flex-col items-center">
            <svg width="30" height="31" viewBox="0 0 30 31"><path d="M3 19L10 3L15 19M5 13H13" stroke="#b452b4" strokeWidth="2.600" fill="none" /><path d="M0 19H6" stroke="#b452b4" strokeWidth="2" /><path d="M10 27L18 7L26 27M13 20H23" stroke="#3f74c4" strokeWidth="3.200" fill="none" /><path d="M6 27.500H13M21 27.500H30" stroke="#3f74c4" strokeWidth="2" /></svg>
            <span className="mt-[4px]">Modifier</span>
            <span className="flex items-center gap-[3px] whitespace-nowrap">les styles <Caret size={5} /></span>
          </div>
        </div>
      </Group>
      <Group w="w-[71px]" label="">
        <div className="flex flex-col items-center pt-[4px] text-[12px] leading-[15px] text-[#1f4f94]">
          <div className="flex h-[31px] w-[31px] items-start justify-center rounded-[4px] border border-[#a8c4e6] bg-[linear-gradient(#dfe9f6_70%,#c4daf2_72%)] pt-[5px]">
            <svg width="17" height="14" viewBox="0 0 17 14"><path d="M2 3L3.500 0H6V6H7V13H.5V7ZM15 3L13.500 0H11V6H10V13H16.500V7ZM6 4H11V7H6Z" fill="#41659f" /><path d="M2 8V12M12 8V12" stroke="#fff" strokeWidth="1.500" /></svg>
          </div>
          <span className="mt-[4px] tracking-[-0.25px]">Modification</span>
          <span className="mt-[2px]"><Caret /></span>
        </div>
      </Group>
    </div>
  );
}

const hNums = Array.from({ length: 15 }, (_, i) => i + 1);
const vNums = Array.from({ length: 12 }, (_, i) => i + 15);

function HRuler() {
  return (
    <svg width="686" height="24" viewBox="889 226 686 24" className="block shrink-0" fontFamily="'Open Sans',sans-serif" fontSize="10">
      <rect x="889" y="226" width="686" height="24" fill="#9cbbe4" />
      <rect x="903" y="232" width="664" height="10" fill="#fff" />
      {hNums.map((n) => {
        const x = 900 + n * 41.7;
        return (
          <g key={n}>
            <text x={x} y="241" textAnchor="middle" fill="#444">{n}</text>
            <path d={`M${x - 21} 234V241M${x + 10.500} 237V238.500M${x - 10.500} 237V238.500`} stroke="#555" />
            <path d={`M${x + 9} 245V248`} stroke="#777" />
          </g>
        );
      })}
      <path d="M1546 234V241M1557 237V238.500" stroke="#555" />
      <path d="M895.500 228.500H903.500V231L899.500 235.500L895.500 231ZM899.500 236L903.500 240.500V243.500H895.500V240.500ZM895.500 244.500H903.500V248.500H895.500Z" fill="#e8eef8" stroke="#6d7f9c" />
      <path d="M1567.500 236L1571.500 240.500V243.500H1563.500V240.500Z" fill="#e8eef8" stroke="#6d7f9c" />
    </svg>
  );
}

function VRuler() {
  return (
    <svg width="24" height="511" viewBox="864 250 24 511" className="block shrink-0" fontFamily="'Open Sans',sans-serif" fontSize="10">
      <rect x="864" y="250" width="24" height="511" fill="#9cbbe4" />
      <rect x="870" y="250" width="12" height="424" fill="#fff" />
      <rect x="870" y="674" width="12" height="87" fill="#b4caea" />
      {vNums.map((n) => {
        const y = 270 + (n - 15) * 41.800;
        return (
          <g key={n}>
            <text transform={`translate(880 ${y}) rotate(-90)`} textAnchor="middle" fill="#444">{n}</text>
            <path d={`M874 ${y + 21}H879M876 ${y + 10.500}H877.500M876 ${y - 10.500}H877.500`} stroke="#555" />
          </g>
        );
      })}
    </svg>
  );
}

const tone: Record<string, string> = { Favorable: "text-[#12a850]", Moyen: "text-[#f5b32e]", Défavorable: "text-[#e2202c]" };

const t1 = [
  ["F – E > 40", "Favorable", "Favorable", "Moyen"],
  ["0 < F – E < 40", "Favorable", "Moyen", "Défavorable"],
  ["F – E < 0", "Moyen", "Défavorable", "Défavorable"],
];

function SoilTables() {
  return (
    <div className="absolute top-[15px] left-[21px] flex w-[318px] flex-col font-['Liberation_Sans',sans-serif] font-bold text-[#2c2c2c]">
      <div className="pl-[3px] text-[9.200px] leading-[11px] tracking-[-0.08px] whitespace-nowrap">
        <div className="tracking-[-0.12px]">T1: Statut de disponibilité du phosphore apporté par les engrais en</div>
        <div className="tracking-[-0.12px]">fonction du bilan F- E (Fumure – Exportations)&nbsp; et du pouvoir fixateur:</div>
      </div>
      <div className="mt-[4px] ml-[3px] grid w-[299px] grid-cols-[94px_68px_68px_66px] grid-rows-[15px_15px_16px_15px_16px] gap-px text-center font-['Lato',sans-serif] text-[9.500px] leading-[15px] font-black">
        <div className="row-span-2 flex items-center justify-center bg-[#6284ce] text-[12px] text-white">F – E</div>
        <div className="col-span-3 bg-[#6284ce] text-white">Pouvoir Fixateur</div>
        <div className="bg-[#d0d6ec]">Faible</div>
        <div className="bg-[#d0d6ec]">Modéré</div>
        <div className="bg-[#d0d6ec]">Elevé</div>
        {t1.map((r, i) =>
          r.map((c, j) => (
            <div key={`${i}${j}`} className={`${i === 1 ? "bg-[#d0d6ec]" : "bg-[#e9ecf6]"} ${tone[c] ?? ""}`}>{c}</div>
          )),
        )}
      </div>
      <div className="mt-[9px] flex">
        <div className="w-[224px] pl-[6px] text-[9.200px] leading-[11px] whitespace-nowrap">
          <div className="tracking-[-0.1px]">T2:&nbsp; Evaluation du passé récent de fertilisation en</div>
          <div className="tracking-[-0.1px]">l’absence du bilan F-E et du pouvoir fixateur:</div>
        </div>
        <svg width="20" height="33" viewBox="0 0 20 33" className="-mt-[4px] shrink-0"><path d="M2 1Q18 2 17 15Q16 25 8 28V32L1 27L8 22V25Q13 22 13 15Q12 5 2 3Z" fill="#c0a24a" stroke="#8c7630" strokeWidth=".7" /></svg>
        <div className="-mt-[1px] ml-px text-[10.500px] leading-[13px] font-normal tracking-[-0.1px] whitespace-nowrap">
          Utilisé dans la
          <br />
          grille COMIFE
        </div>
      </div>
      <div className="grid w-[299px] grid-cols-[97px_68px_68px_63px] grid-rows-[52px_15px] gap-px text-center font-['Lato',sans-serif] text-[9.500px] leading-[15px] font-black">
        <div className="bg-[#a276ba] pt-[2px] leading-[12.300px] text-white">Nb d’années<br />successives sans<br />apport d’engrais (min<br />ou organique)</div>
        <div className="flex items-center justify-center bg-[#a276ba] text-[14px] text-white">0</div>
        <div className="flex items-center justify-center bg-[#a276ba] text-[14px] text-white">1</div>
        <div className="flex items-center justify-center bg-[#a276ba] text-[14px] text-white">2 ou +</div>
        <div className="bg-[#dfd5e8]">Passé de fertilisation</div>
        <div className="bg-[#dfd5e8] text-[#12a850]">Favorable</div>
        <div className="bg-[#dfd5e8] text-[#f5b32e]">Moyen</div>
        <div className="bg-[#dfd5e8] text-[#e2202c]">Défavorable</div>
      </div>
    </div>
  );
}

const colX = [386, 499, 598, 664, 737, 845, 928, 1012];
const grid = [
  { y: 464, h: 42, v: ["2.2", "1.5", "1.2", "1.0", "0.8", "0", "0"], c: ["#0a63f0", "#5ca8f6", "#a8d0fb", "#8fc4fb", "#c4e4fa", "#eef8fd", "#eef8fd"] },
  { y: 513, h: 42, v: ["3.3", "2.0", "1.5", "1.2", "1.0", "0", "0"], c: ["#cc6608", "#fa6604", "#fc9c98", "#fc9c98", "#fcc8c8", "#fde8e8", "#fde8e8"] },
  { y: 562, h: 44, v: ["3.7", "2.7", "2.0", "1.5", "1.2", "0.8", "0"], c: ["#2c9a30", "#32c832", "#8af88a", "#8af88a", "#c8fcc8", "#e6fce8", "#e6fce8"] },
];
const flags: [number, string, string][] = [
  [498, "Tranf.", ""],
  [597, "Timp", "-10%"],
  [659, "Timp.", ""],
  [736, "Timp", "+10%"],
  [849, "En", "Timp."],
  [932, "En", "Timp."],
];

function ComiferFigure() {
  return (
    <svg width="360" height="200" viewBox="60 27 1080 600" className="absolute top-0 left-[332px]" fontFamily="'Liberation Sans',sans-serif">
      <text x="108" y="62" fontSize="30" fill="#222" textLength="312">Dose P et K à apporter =</text>
      <text x="454" y="63" fontSize="29" fontWeight="bold" fill="#169a4c" textLength="277">Exportation (P ou K)</text>
      <text x="738" y="63" fontSize="30" fill="#222">X</text>
      <path d="M761 27V87H1040V27" fill="none" stroke="#e8823c" strokeWidth="3" />
      <text x="767" y="63" fontSize="29" fontWeight="bold" fill="#34466a" textLength="264">Coef&#160; Multiplicateur</text>
      <g fontSize="23" fill="#333c58">
        <text x="454" y="114" textLength="586">+ apports équivalents à la quantité de P et K exportés par</text>
        <text x="454" y="139" textLength="325">les pailles si elles sont enlevées</text>
      </g>
      <path d="M1080 175H67V296H1080" fill="none" stroke="#e2702a" strokeWidth="3" />
      <g fontFamily="Lato,sans-serif" fill="#e2702a">
        <text x="78" y="224" fontSize="43" textLength="992">Coefficient multiplicateur déterminé à partir de <tspan fontWeight="bold">3</tspan> des</text>
        <text x="254" y="279" fontSize="43" textLength="638">4 critères de la méthode COMIFER</text>
        <g fontSize="23" fontWeight="900">
          <text x="360" y="319" textLength="134">Passé récent</text>
          <text x="349" y="350" textLength="157">de fertilisation</text>
          <text x="98" y="355" textLength="125">Exigence de</text>
          <text x="110" y="386" textLength="101">la culture</text>
          <text x="712" y="345" textLength="153">Teneurs du sol</text>
        </g>
      </g>
      <g stroke="#e2702a" strokeWidth="3.500" fill="#e2702a">
        <path d="M248 298V448M326 300V340M685 300V398" />
        <path d="M242 445H254L248 458ZM320 340H332L326 352ZM679 398H691L685 409Z" />
      </g>
      <path d="M252 359H400V428L326 463L252 428Z" fill="#cdf0a4" stroke="#a8b878" strokeWidth="3" />
      <g fontSize="16" fill="#334" textAnchor="middle">
        <text x="324" y="385">Nb. d’années</text>
        <text x="324" y="400">sans apport</text>
        <text x="324" y="415">depuis la dernière</text>
        <text x="324" y="429">fertilisation</text>
      </g>
      <text x="114" y="436" fontSize="25" fontWeight="bold" fill="#f01018" textLength="132">Grille 2009</text>
      {flags.map(([x, a, b]) => (
        <g key={x}>
          <path d={`M${x - 28} 421H${x + 28}L${x} 452Z`} fill="#fbd8c0" stroke="#f2a070" strokeWidth="3" />
          <text x={x} y={b ? 433 : 442} fontSize="17" fontWeight="bold" fill="#202850" textAnchor="middle">{a}</text>
          <text x={x} y={b ? 449 : 458} fontSize="17" fontWeight="bold" fill="#202850" textAnchor="middle">{b}</text>
        </g>
      ))}
      <g fill="none" stroke="#555" strokeWidth="3">
        <path d="M113 463H283V613H113M283 463H386M283 510H386M283 558H386M283 606H386M114 400V620" />
      </g>
      <g textAnchor="middle" fill="#222">
        <text x="194" y="493" fontSize="25" fontWeight="bold" textLength="87">Cultures</text>
        <text x="195" y="528" fontSize="24" fontWeight="bold" textLength="157">très exigeantes</text>
        <text x="195" y="553" fontSize="19" textLength="130">Betterave - Colza</text>
        <text x="195" y="575" fontSize="19">Luzerne</text>
        <text x="195" y="598" fontSize="19" textLength="120">Pomme de terre</text>
      </g>
      <g fontFamily="'DejaVu Sans',sans-serif" fontWeight="bold" fontStyle="italic" textAnchor="middle">
        <g fontSize="20">
          <text x="337" y="496">0</text>
          <text x="340" y="545">1 an</text>
          <text x="340" y="584">2 ans</text>
          <text x="338" y="611">ou +</text>
        </g>
        {grid.map((r) =>
          r.v.map((v, i) => (
            <g key={`${r.y}-${i}`}>
              <rect x={colX[i]} y={r.y} width={colX[i + 1] - colX[i]} height={r.h} fill={r.c[i]} stroke="#777" strokeWidth="3" />
              <text x={(colX[i] + colX[i + 1]) / 2 + 2} y={r.y + 29} fontSize="25" fill={i === 0 ? "#fff" : "#1a1a1a"}>{v}</text>
            </g>
          )),
        )}
      </g>
    </svg>
  );
}

function WordWindow() {
  return (
    <div className="absolute top-[80px] left-[856px] flex h-[728px] w-[744px] flex-col rounded-[7px] border border-[#4c4258] bg-[#bda9d0] px-[6px] pb-[6px] shadow-[0_0_10px_2px_rgba(0,0,0,.45),inset_0_0_0_1px_#e6dcf0]">
      <div className="flex h-[28px] shrink-0 items-center bg-[linear-gradient(90deg,#c2b0d3,#cbbbd9_30%,#d3c6df_60%,#c3b1d3)] text-[12px] text-black">
        {/* Office orb hangs over the ribbon tabs */}
        <div className="absolute top-[6px] left-[10px]">
          <svg width="38" height="38" viewBox="0 0 38 38">
            <defs><radialGradient id="orb" cx=".5" cy=".35" r=".65"><stop offset="0" stopColor="#fff" /><stop offset=".6" stopColor="#dfe3ec" /><stop offset="1" stopColor="#9aa4b8" /></radialGradient></defs>
            <circle cx="19" cy="19" r="18" fill="url(#orb)" stroke="#8a93a8" />
            <g fill="none"><path d="M17.500 9H9.500V18H14" stroke="#e2481c" strokeWidth="3.600" /><path d="M21 13.500H26.500V18H21Z" stroke="#3a86cc" strokeWidth="2.200" /><path d="M11 22.500H16.500V28.500H11Z" stroke="#f0ac1c" strokeWidth="3" /><path d="M21 21.500H27.500V28H21Z" stroke="#66ac2c" strokeWidth="3.400" /><path d="M19 12V27M13 19.500H26" stroke="#fff" strokeWidth="1" /></g>
          </svg>
        </div>
        <div className="ml-[46px] flex h-[22px] w-[131px] items-center gap-[8px] rounded-r-full border border-l-0 border-[#9b8cae] bg-[#cfc2dc] pl-[8px]">
          <svg width="14" height="14" viewBox="0 0 14 14"><rect x=".5" y=".5" width="13" height="13" fill="#3c4cb4" stroke="#28307c" /><rect x="3" y="1" width="8" height="6" fill="#f2f2fa" /><rect x="4" y="9" width="6" height="4" fill="#dfe3f0" /></svg>
          <svg width="13" height="12" viewBox="0 0 13 12"><path d="M2 5Q8 0 11 4Q12 8 7 11" stroke="#3f6cc4" strokeWidth="2.600" fill="none" /><path d="M0 1V8H6Z" fill="#3f6cc4" /></svg>
          <span className="-ml-[2px]"><Caret size={5} /></span>
          <svg width="13" height="13" viewBox="0 0 13 13"><path d="M3 2Q0 6 3 9.500Q7 12.500 10.500 9Q12.500 5 9 2" stroke="#3f6cc4" strokeWidth="2.600" fill="none" /><path d="M7 0H12V5Z" fill="#3f6cc4" /></svg>
          <svg width="16" height="15" viewBox="0 0 16 15"><rect x="3" y="1" width="9" height="5" fill="#fff" stroke="#666" /><rect x=".5" y="5.500" width="15" height="6" fill="#a9a9ae" stroke="#555" /><rect x="3.500" y="9.500" width="9" height="5" fill="#fff" stroke="#666" /><path d="M10 3L12 5L15 0" stroke="#2c9a3c" strokeWidth="2" fill="none" /></svg>
          <svg width="14" height="15" viewBox="0 0 14 15"><path d="M.5 .5H8L11.500 4V13.500H.5Z" fill="#fff" stroke="#777" /><circle cx="7" cy="8" r="3.500" fill="#cfe6f8" stroke="#4c6c94" /><path d="M9.500 10.500L13 14" stroke="#b4782c" strokeWidth="2" /></svg>
        </div>
        <span className="ml-[8px]"><svg width="7" height="7" viewBox="0 0 7 7"><path d="M1 .5H6" stroke="#334a80" /><path d="M0 3H7L3.500 6.500Z" fill="#334a80" /></svg></span>
        <span className="ml-[14px] flex-1 pt-px tracking-[-0.29px] whitespace-nowrap [text-shadow:0_0_5px_#f2ecf8]">Gestion de la fertilité des sols et fertilisation des cultures.docx - Microsoft ...</span>
        <div className="self-start"><WindowButtons danger={false} /></div>
      </div>
      <div className="flex min-h-0 flex-1 flex-col border border-[#5b6585] bg-[#bcd7fa]">
        <div className="flex h-[24px] shrink-0 items-stretch pl-[49px] text-[12px] tracking-[-0.1px] text-[#1b4390]">
          <div className="mt-[2px] w-[59px] rounded-t-[4px] border border-b-0 border-[#8fc4ee] bg-[#e9f2fb] text-center leading-[21px]">Accueil</div>
          {wordTabs.map(([t, w]) => (
            <div key={t} className={`pt-[3px] text-center leading-[21px] whitespace-nowrap ${w}`}>{t}</div>
          ))}
          <svg width="14" height="14" viewBox="0 0 14 14" className="mt-[4px] -ml-px"><circle cx="7" cy="7" r="6.300" fill="#2458c4" stroke="#dce8fc" /><path d="M4.800 5.300Q5 3.300 7.200 3.400Q9.300 3.700 8.900 5.500Q7.200 6.700 7.200 8M7.200 9.500V11" stroke="#fff" strokeWidth="1.500" fill="none" /></svg>
        </div>
        <Ribbon />
        <div className="h-[2px] shrink-0 bg-[#9cbbe4]" />
        <div className="flex h-[24px] shrink-0">
          <div className="flex w-[25px] items-center justify-center border border-[#5c80c4] bg-[#b6cdf0]">
            <div className="flex h-[15px] w-[15px] items-center justify-center border border-[#5c80c4] bg-[#dfe9f8]">
              <svg width="6" height="6"><path d="M1 0V5H6" stroke="#223" strokeWidth="2" fill="none" /></svg>
            </div>
          </div>
          <HRuler />
          <div className="flex flex-1 flex-col items-center bg-[#a5c4f0] pt-[2px]">
            <i className="h-[2px] w-[9px] bg-[#36466a]" />
            <svg width="15" height="15" viewBox="0 0 15 15" className="mt-[3px]"><rect x=".5" y=".5" width="14" height="14" fill="#e6ecf6" stroke="#7d8ca8" /><path d="M3 3H8V6H12.500V12H7V8.500H3ZM4 4L11 11M9 11H11.500V8.500" stroke="#444" fill="none" /></svg>
          </div>
        </div>
        <div className="flex h-[511px] shrink-0">
          <VRuler />
          <div className="relative w-[687px] shrink-0 overflow-hidden bg-white">
            <div className="-mt-[10px] flex items-center pl-[42px] font-['DejaVu_Serif_Condensed','DejaVu_Serif',serif] text-[16.500px] leading-[22px] text-black [font-stretch:condensed]">
              <svg width="13" height="12" viewBox="0 0 13 12"><path d="M0 0L13 6L0 12L4 6Z" fill="#000" /></svg>
              <span className="ml-[10px] tracking-[0px]">Passé récent de fertilisation</span>
            </div>
            <SoilTables />
            <ComiferFigure />
            <div className="mt-[268px] ml-[12px] w-[668px] font-['DejaVu_Serif_Condensed','DejaVu_Serif',serif] text-[16.500px] leading-[24px] text-black [font-stretch:condensed]">
              <div className="tracking-[-0.15px] whitespace-nowrap [text-align-last:justify]">Les pratiques de fertilisation sont très dépendantes de l’orientation des systèmes de</div>
              <div className="w-[494px] whitespace-nowrap [text-align-last:justify]">production, elles sont soumises à des contraintes réglementaires.</div>
            </div>
          </div>
          <div className="flex flex-1 flex-col items-center bg-[#a5c4f0]">
            <div className="flex h-[460px] w-[15px] flex-col items-center bg-[#7898c4]">
              <svg width="9" height="5" viewBox="0 0 9 5" className="mt-[6px]"><path d="M0 5L4.500 0L9 5Z" fill="#33486e" /></svg>
              <div className="mt-[402px] h-[8px] w-[15px] border border-[#4c658e] bg-[#dfe6f0]" />
              <svg width="9" height="5" viewBox="0 0 9 5" className="mt-[28px]"><path d="M0 0L4.500 5L9 0Z" fill="#33486e" /></svg>
            </div>
            <svg width="8" height="44" viewBox="0 0 8 44" className="mt-[5px]"><path d="M1.500 3L4 0L6.500 3ZM1.500 6L4 3L6.500 6Z" fill="#111" stroke="#111" strokeWidth=".6" /><circle cx="4" cy="20" r="3" fill="#b8b8b8" stroke="#111" /><path d="M1.500 34H6.500L4 37ZM1.500 37H6.500L4 40Z" fill="#111" stroke="#111" strokeWidth=".6" /></svg>
          </div>
        </div>
        <div className="flex h-[16px] shrink-0 items-center border-t border-[#c4daf6] bg-[#a5c4f0] pr-[16px]">
          <div className="flex h-[15px] flex-1 items-center bg-[#7898c4] px-[5px]">
            <svg width="5" height="9" viewBox="0 0 5 9"><path d="M5 0L0 4.500L5 9Z" fill="#33486e" /></svg>
            <div className="ml-[91px] flex h-[14px] w-[503px] items-center justify-center border border-[#4c658e] bg-[linear-gradient(#eef2f8,#d6dfea_45%,#b3c3d8_50%,#c0cde0)]">
              <svg width="8" height="7"><path d="M.5 0V7M2.500 0V7M4.500 0V7M6.500 0V7" stroke="#6a7a94" /></svg>
            </div>
            <svg width="5" height="9" viewBox="0 0 5 9" className="ml-auto"><path d="M0 0L5 4.500L0 9Z" fill="#33486e" /></svg>
          </div>
        </div>
        <div className="flex min-h-0 flex-1 items-stretch border-t border-[#567db8] bg-[linear-gradient(#dbe8fa,#c6dcf8_45%,#aecaf0_50%,#d4e5fb)] text-[12px] leading-[22px] tracking-[-0.36px] text-[#122a66]">
          <span className="w-[97px] border-r border-[#93b4e0] pl-[8px] whitespace-nowrap">Page : 20 sur 21</span>
          <span className="w-[80px] border-r border-[#93b4e0] pl-[9px] whitespace-nowrap">Mots : 5 837</span>
          <span className="flex w-[41px] items-center pl-[8px]">
            <svg width="17" height="15" viewBox="0 0 17 15"><path d="M0 9L6 5L14 9L8 14Z" fill="#e8ecf4" stroke="#5c6c94" /><path d="M7 1L15 9M15 0L7 8" stroke="#e0401c" strokeWidth="2" /></svg>
          </span>
          <span className="w-[94px] border-r border-[#93b4e0] whitespace-nowrap">Français (France)</span>
          <span className="flex w-[34px] items-center justify-center border-r border-[#93b4e0]">
            <svg width="15" height="13" viewBox="0 0 15 13"><rect x=".5" y=".5" width="14" height="12" fill="#fff" stroke="#4c6ca8" /><rect x="1" y="1" width="13" height="3" fill="#4a7cd0" /><circle cx="3" cy="3" r="2.800" fill="#d8442c" /><path d="M3 7.500H13M3 10.500H13M8 5V12" stroke="#98a8c8" /></svg>
          </span>
          <span className="flex-1" />
          <span className="flex w-[203px] items-center border-l border-[#567db8] bg-[linear-gradient(#b4cdf0,#86a9dc_50%,#9ebdea)] pl-[9px]">
            <span className="w-[39px] whitespace-nowrap">110 %</span>
            <svg width="134" height="17" viewBox="0 0 134 17" className="shrink-0">
              <path d="M17 8.500H117" stroke="#dce8f8" /><path d="M17 9.500H117" stroke="#5878ac" />
              <circle cx="8.500" cy="8.500" r="7.500" fill="#dbe6f4" stroke="#4c648e" /><path d="M4.500 8.500H12.500" stroke="#44546e" strokeWidth="2.400" />
              <circle cx="126" cy="8.500" r="7.500" fill="#dbe6f4" stroke="#4c648e" /><path d="M122 8.500H130M126 4.500V12.500" stroke="#44546e" strokeWidth="2.400" />
              <path d="M63.500 2.500H71.500V10L67.500 14L63.500 10Z" fill="#e4ecf8" stroke="#4c648e" />
            </svg>
            <svg width="11" height="11" viewBox="0 0 11 11" className="mt-[8px] ml-[8px]" fill="#4a6aa4"><path d="M8 0H10V2H8ZM4 4H6V6H4ZM8 4H10V6H8ZM0 8H2V10H0ZM4 8H6V10H4ZM8 8H10V10H8Z" /></svg>
          </span>
        </div>
      </div>
    </div>
  );
}

/* ---------- taskbar ---------- */

function TaskButton({ active = false, children }: { active?: boolean; children: ReactNode }) {
  return (
    <div className={`flex h-[38px] w-[58px] items-center justify-center rounded-[3px] border border-[#e2d4f0] shadow-[0_0_0_1px_#3f2560] ${active ? "bg-[linear-gradient(135deg,#e8def0,#c2aed8_50%,#d2c2e2)]" : "bg-[linear-gradient(160deg,#c2aada,#9670bc_50%,#8a62b4)]"}`}>
      {children}
    </div>
  );
}

function Taskbar() {
  return (
    <div className="absolute inset-x-0 bottom-0 flex h-[40px] items-center border-t border-[#24123c] bg-[linear-gradient(90deg,#5e3e84,#6b4596_3%,#7d50a6_20%,#7a4ca2_60%,#7f52a8_82%,#66458a_89%,#5f4080)] text-white shadow-[inset_0_1px_0_#a886cc]">
      <div className="flex w-[60px] justify-start pl-[8px]">
        <svg width="38" height="38" viewBox="0 0 38 38">
          <defs><radialGradient id="st" cx=".5" cy=".95" r=".95"><stop offset="0" stopColor="#14d4f8" /><stop offset=".4" stopColor="#1a74b8" /><stop offset=".65" stopColor="#164878" /><stop offset="1" stopColor="#8ab0c8" /></radialGradient></defs>
          <circle cx="19" cy="19" r="18" fill="url(#st)" stroke="#223c5c" />
          <path d="M9 11Q14 7 19 10L17 18Q12 15 7 18Z" fill="#f0642c" /><path d="M21 11Q26 14 31 11L29 19Q24 22 19 19Z" fill="#9ccc3c" />
          <path d="M7 20Q12 17 17 20L15 28Q10 25 5 28Z" fill="#4aa4ec" transform="translate(1 0)" /><path d="M19 21Q24 24 29 21L27 29Q22 32 17 29Z" fill="#fcc82c" />
        </svg>
      </div>
      <div className="flex gap-[4px]">
        <TaskButton>
          <svg width="28" height="28" viewBox="-14 -14 28 28">
            <path d="M0 0L-12.120 -7A14 14 0 0 1 12.120 -7Z" fill="#e23c2c" />
            <path d="M0 0L12.120 -7A14 14 0 0 1 0 14Z" fill="#fccc1c" />
            <path d="M0 0L0 14A14 14 0 0 1 -12.120 -7Z" fill="#4caa48" />
            <path d="M0 -6.500H12.500A14 14 0 0 1 0 14L5.600 3.200Z" fill="#fccc1c" />
            <circle r="6.500" fill="#fff" /><circle r="5" fill="#3a7cd4" />
          </svg>
        </TaskButton>
        <TaskButton>
          <svg width="33" height="30" viewBox="0 0 33 30">
            <path d="M2 4L4 1H13L15 3H29L31 5V27H1V5Z" fill="#f3dc8c" stroke="#c8a450" />
            <path d="M5 2H9" stroke="#1cae3c" strokeWidth="3" /><path d="M13 4H16" stroke="#d0402c" strokeWidth="2" /><path d="M21 6H25" stroke="#2c8cdc" strokeWidth="2" />
            <path d="M1 8H32L31 28H1Z" fill="#fbeeb0" stroke="#d8b860" />
            <path d="M7 29V19H27V29M7 29H11V24H23V29H27" fill="none" stroke="#68b4d8" strokeWidth="3" />
          </svg>
        </TaskButton>
        <TaskButton>
          <svg width="31" height="31" viewBox="0 0 31 31">
            <path d="M6 1H25V26H1V8Q1 3 6 1Z" fill="#2c5cac" stroke="#dce8f8" />
            <path d="M8 3H30V30L8 27Z" fill="#f4f8fd" stroke="#9ab0d0" />
            <path d="M10.500 8L13 17L16 9L18.500 17L21 7" stroke="#1f4290" strokeWidth="2.400" fill="none" />
            <path d="M22 9H27M22 12.500H27M22 16H27M11 20H27M11 23.500H27" stroke="#1f4290" strokeWidth="2" />
          </svg>
        </TaskButton>
        <TaskButton active>
          <svg width="28" height="27" viewBox="0 0 28 27" className="mb-[3px]">
            <defs><linearGradient id="ar" x1="0" y1="0" x2="0" y2="1"><stop offset="0" stopColor="#e41010" /><stop offset="1" stopColor="#6c0404" /></linearGradient></defs>
            <rect width="28" height="27" fill="url(#ar)" />
            <path d="M13 4Q17 3 14.500 11Q10 22 5 23Q4 20 13 17Q23 15 24 18Q22 20 16 14Q12 8 13 4Z" stroke="#fff" strokeWidth="1.400" fill="none" />
          </svg>
        </TaskButton>
      </div>
      <div className="ml-auto flex h-full items-center">
        <span className="mt-[-5px] w-[29px] font-['Roboto',sans-serif] text-[12px]">FR</span>
        <svg width="8" height="5" viewBox="0 0 8 5" className="mt-[2px]"><path d="M0 5L4 0L8 5Z" fill="#fff" /></svg>
        <svg width="16" height="16" viewBox="0 0 16 16" className="ml-[12px]"><path d="M9 0L15 5L12 6L13 12L10 11L8 9L1 15L6 7L2 3L8 4Z" fill="#fff" stroke="#2a2434" strokeWidth=".8" /></svg>
        <svg width="16" height="12" viewBox="0 0 16 12" className="ml-[8px]"><path d="M1.500 10V12M4.500 8V12M8 5.500V12M11.500 3V12M14.500 0V12" stroke="#fff" strokeWidth="2.200" /></svg>
        <svg width="16" height="14" viewBox="0 0 16 14" className="ml-[8px]"><path d="M0 4.500H3L7 .5V13.500L3 9.500H0Z" fill="#fff" /><path d="M9 5Q10 7 9 9M11 3.500Q13 7 11 10.500M13 2Q16 7 13 12" stroke="#fff" fill="none" /></svg>
        <svg width="16" height="15" viewBox="0 0 16 15" className="ml-[8px]"><path d="M4.500 0L8 2.500L11.500 0L15 3L12 5.500L15 8L11.500 10.500L8 8L4.500 10.500L1 8L4 5.500L1 3Z" fill="#7cc8f4" /><path d="M4 5.500L8 2.500L12 5.500L8 8Z" fill="#e8f6fe" /><path d="M4 11L8 9L12 11L8 14Z" fill="#4ca4e0" /><circle cx="12" cy="11" r="4" fill="#28a028" /><path d="M10 11L11.500 12.500L14 9.500" stroke="#fff" fill="none" /></svg>
        <div className="ml-[17px] flex w-[60px] flex-col text-center text-[12px] leading-[17px] tracking-[-0.4px]">
          <span>16:46</span>
          <span>16/04/2014</span>
        </div>
        <div className="ml-[11px] h-full w-[15px] border border-[#a08cba] bg-[linear-gradient(#8a6ea8,#4a3068_50%,#7c5ca0)]" />
      </div>
    </div>
  );
}

export default function App() {
  return (
    <div className={`relative h-[900px] w-[1600px] overflow-hidden bg-[#484848] ${UI}`}>
      <ChromeWindow />
      <AdobeWindow />
      <WordWindow />
      <Taskbar />
    </div>
  );
}
